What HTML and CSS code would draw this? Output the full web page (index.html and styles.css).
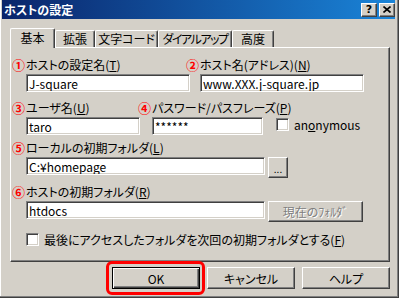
FILE: index.html
```html
<!DOCTYPE html>
<html lang="ja">
<head>
    <meta charset="UTF-8">
    <title>ホストの設定</title>
    <link rel="stylesheet" href="styles.css">
</head>
<body>
    <div class="window">
        <div class="titlebar">
            <span class="title">ホストの設定</span>
            <div class="title-buttons">
                <span class="tbtn help-btn">?</span>
                <span class="tbtn">
                    <svg width="8" height="7" viewBox="0 0 8 7"><path d="M0.5 0.5 L7.5 6.5 M7.5 0.5 L0.5 6.5" stroke="#000" stroke-width="1.6"/></svg>
                </span>
            </div>
        </div>

        <div class="client">
            <!-- Tabs -->
            <div class="tabs">
                <div class="tab active tab-basic">基本</div>
                <div class="tab tab-ext">拡張</div>
                <div class="tab tab-code">文字コード</div>
                <div class="tab tab-dial">ダイアルアップ</div>
                <div class="tab tab-adv">高度</div>
            </div>

            <div class="panel">
                <div class="row">
                    <div class="field w164">
                        <div class="label"><span class="num">①</span>ホストの設定名(<u>T</u>)</div>
                        <input class="text" type="text" value="J-square" readonly>
                    </div>
                    <div class="field w164">
                        <div class="label"><span class="num">②</span>ホスト名(アドレス)(<u>N</u>)</div>
                        <input class="text" type="text" value="www.XXX.j-square.jp" readonly>
                    </div>
                </div>

                <div class="row row2">
                    <div class="field w114">
                        <div class="label"><span class="num">③</span>ユーザ名(<u>U</u>)</div>
                        <input class="text" type="text" value="taro" readonly>
                    </div>
                    <div class="field w111">
                        <div class="label"><span class="num">④</span>パスワード/パスフレーズ(<u>P</u>)</div>
                        <input class="text" type="text" value="******" readonly>
                    </div>
                    <div class="check anon">
                        <span class="box"></span>
                        <span>an<u>o</u>nymous</span>
                    </div>
                </div>

                <div class="row row3">
                    <div class="field">
                        <div class="label"><span class="num">⑤</span>ローカルの初期フォルダ(<u>L</u>)</div>
                        <div class="line">
                            <input class="text w239" type="text" value="C:¥homepage" readonly>
                            <span class="btn browse">...</span>
                        </div>
                    </div>
                </div>

                <div class="row row4">
                    <div class="field">
                        <div class="label"><span class="num">⑥</span>ホストの初期フォルダ(<u>R</u>)</div>
                        <div class="line">
                            <input class="text w239" type="text" value="htdocs" readonly>
                            <span class="btn current disabled">現在のﾌｫﾙﾀﾞ</span>
                        </div>
                    </div>
                </div>

                <div class="check last">
                    <span class="box"></span>
                    <span>最後にアクセスしたフォルダを次回の初期フォルダとする(<u>F</u>)</span>
                </div>
            </div>

            <div class="actions">
                <span class="btn dlg default">OK</span>
                <span class="btn dlg">キャンセル</span>
                <span class="btn dlg">ヘルプ</span>
            </div>
        </div>

        <!-- Red highlight around OK -->
        <div class="highlight"></div>
    </div>
</body>
</html>
```

FILE: styles.css
```css
body {
    margin: 0;
    font-family: "Noto Sans CJK JP", "MS UI Gothic", sans-serif;
    font-size: 12px;
    font-feature-settings: "palt";
    color: #000;
}

.window {
    position: relative;
    box-sizing: border-box;
    width: 399px;
    height: 298px;
    background-color: #d4d0c8;
    border-right: 1px solid #404040;
    border-bottom: 1px solid #404040;
    box-shadow: inset -1px -1px #808080, inset 1px 0 #ffffff;
    padding: 0 3px 3px 2px;
}

/* Title bar */
.titlebar {
    height: 19px;
    display: flex;
    align-items: center;
    justify-content: space-between;
    background: linear-gradient(90deg, #0a246a, #1a84d8);
    padding-left: 2px;
}

.title {
    color: #fff;
    font-weight: bold;
    font-size: 12px;
    line-height: 19px;
}

.title-buttons {
    display: flex;
    gap: 2px;
}

.tbtn {
    box-sizing: border-box;
    width: 16px;
    height: 14px;
    background: #d4d0c8;
    border: 1px solid;
    border-color: #fff #404040 #404040 #fff;
    box-shadow: inset -1px -1px #808080;
    display: flex;
    justify-content: center;
    align-items: center;
    font-family: "DejaVu Sans", sans-serif;
    font-weight: bold;
    font-size: 11px;
    line-height: 1;
}

/* Client area */
.client {
    padding: 9px 5px 0 8px;
}

.tabs {
    display: flex;
    align-items: flex-end;
    height: 19px;
    position: relative;
    z-index: 1;
}

.tab {
    box-sizing: border-box;
    height: 17px;
    line-height: 15px;
    text-align: center;
    white-space: nowrap;
    border-top: 1px solid #fff;
    border-left: 1px solid #fff;
    border-right: 1px solid #404040;
    box-shadow: inset -1px 0 #808080;
    border-radius: 2px 2px 0 0;
}

.tab.active {
    height: 20px;
    margin-bottom: -1px;
    line-height: 18px;
    background: #d4d0c8;
}

.tab-basic { width: 45px; }
.tab-ext { width: 40px; }
.tab-code { width: 63px; }
.tab-dial { width: 74px; letter-spacing: -1.5px; }
.tab-adv { width: 42px; }

.panel {
    box-sizing: border-box;
    width: 380px;
    height: 215px;
    border: 1px solid;
    border-color: #fff #404040 #404040 #fff;
    box-shadow: inset -1px -1px #808080;
    padding: 10px 0 0 15px;
}

.row {
    display: flex;
    gap: 10px;
}

.row2 {
    margin-top: 9px;
    gap: 12px;
}

.row3 {
    margin-top: 6px;
}

.row4 {
    margin-top: 7px;
}

.field {
    display: flex;
    flex-direction: column;
}

.w164 { width: 164px; }
.w114 { width: 114px; }
.w111 { width: 111px; }

.label {
    height: 14px;
    line-height: 14px;
    margin-bottom: 2px;
    white-space: nowrap;
}

.num {
    display: inline-block;
    width: 14px;
    margin-left: -14px;
    color: #f00;
    font-weight: bold;
    font-size: 13px;
}

.text {
    box-sizing: border-box;
    width: 100%;
    height: 18px;
    margin: 0;
    padding: 0 2px;
    background: #fff;
    font: inherit;
    color: #000;
    border: 1px solid;
    border-color: #808080 #fff #fff #808080;
    box-shadow: inset 1px 1px #404040, inset -1px -1px #d4d0c8;
    outline: none;
}

.line {
    display: flex;
    align-items: flex-start;
    gap: 3px;
}

.text.w239 {
    width: 239px;
}

/* Buttons */
.btn {
    box-sizing: border-box;
    display: flex;
    justify-content: center;
    align-items: center;
    background: #d4d0c8;
    border: 1px solid;
    border-color: #fff #404040 #404040 #fff;
    box-shadow: inset -1px -1px #808080;
}

.browse {
    width: 20px;
    height: 21px;
    font-size: 10px;
    line-height: 1;
    padding-top: 2px;
}

.current {
    width: 95px;
    height: 21px;
}

.disabled {
    color: #808080;
    text-shadow: 1px 1px #fff;
}

/* Checkboxes */
.check {
    display: flex;
    align-items: center;
    gap: 5px;
    white-space: nowrap;
}

.box {
    box-sizing: border-box;
    width: 13px;
    height: 13px;
    background: #fff;
    border: 1px solid;
    border-color: #808080 #fff #fff #808080;
    box-shadow: inset 1px 1px #404040, inset -1px -1px #d4d0c8;
}

.anon {
    align-self: flex-end;
    margin-left: 1px;
    margin-bottom: 2px;
}

.last {
    margin-top: 10px;
    height: 14px;
}

/* Dialog buttons */
.actions {
    display: flex;
    justify-content: flex-end;
    gap: 7px;
    width: 380px;
    margin-top: 5px;
}

.dlg {
    width: 88px;
    height: 22px;
}

.dlg.default {
    border: 1px solid #000;
    box-shadow: inset 1px 1px #fff, inset -1px -1px #404040, inset -2px -2px #808080;
}

/* Annotation overlay */
.highlight {
    position: absolute;
    left: 106px;
    top: 261px;
    width: 99px;
    height: 34px;
    box-sizing: border-box;
    border: 3px solid #f00;
    border-radius: 6px;
}
```
